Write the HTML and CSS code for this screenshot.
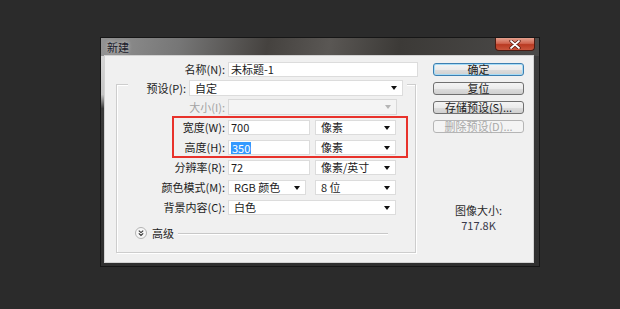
FILE: index.html
```html
<!DOCTYPE html>
<html>

<head>
    <meta charset="UTF-8">
    <title>新建</title>
    <link rel="stylesheet" href="styles.css">
</head>

<body>
    <div class="dialog">
        <div class="titlebar">
            <span class="title">新建</span>
            <span class="close">
                <svg width="14" height="9" viewBox="0 0 14 9">
                    <path d="M3 1 L11 8 M11 1 L3 8" stroke="#4a1208" stroke-width="3.2" stroke-linecap="round" />
                    <path d="M3 1 L11 8 M11 1 L3 8" stroke="#ffffff" stroke-width="1.8" stroke-linecap="round" />
                </svg>
            </span>
        </div>

        <div class="client">
            <div class="form">
                <div class="row name-row">
                    <span class="lbl lbl-name">名称(N):</span>
                    <div class="field text w-name">未标题-1</div>
                </div>

                <div class="group">
                    <div class="preset-row">
                        <span class="lbl lbl-preset">预设(P):</span>
                        <div class="field select w-preset">自定<span class="arrow"></span></div>
                    </div>

                    <div class="row row-size disabled">
                        <span class="lbl">大小(I):</span>
                        <div class="field select w-full"><span class="arrow"></span></div>
                    </div>

                    <div class="row">
                        <span class="lbl">宽度(W):</span>
                        <div class="field text w-num">700</div>
                        <div class="field select w-unit">像素<span class="arrow"></span></div>
                    </div>

                    <div class="row">
                        <span class="lbl">高度(H):</span>
                        <div class="field text w-num"><span class="selected">350</span></div>
                        <div class="field select w-unit">像素<span class="arrow"></span></div>
                    </div>

                    <div class="row">
                        <span class="lbl">分辨率(R):</span>
                        <div class="field text w-num">72</div>
                        <div class="field select w-unit">像素/英寸<span class="arrow"></span></div>
                    </div>

                    <div class="row">
                        <span class="lbl">颜色模式(M):</span>
                        <div class="field select w-mode">RGB 颜色<span class="arrow"></span></div>
                        <div class="field select w-unit w-bits">8 位<span class="arrow"></span></div>
                    </div>

                    <div class="row">
                        <span class="lbl">背景内容(C):</span>
                        <div class="field select w-bg">白色<span class="arrow"></span></div>
                    </div>

                    <div class="advanced">
                        <svg class="adv-btn" width="12" height="12" viewBox="0 0 12 12">
                            <circle cx="6" cy="6" r="5.5" fill="#f7f7f7" stroke="#b4b4b4" />
                            <path d="M3.8 3.6 L6 5.6 L8.2 3.6 M3.8 6.4 L6 8.4 L8.2 6.4" fill="none" stroke="#333" stroke-width="1.1" />
                        </svg>
                        <span class="adv-text">高级</span>
                        <span class="rule"></span>
                    </div>
                </div>

                <!-- annotation drawn over the width / height rows -->
                <div class="highlight"></div>
            </div>

            <div class="side">
                <div class="btn default">确定</div>
                <div class="btn">复位</div>
                <div class="btn">存储预设(S)...</div>
                <div class="btn disabled">删除预设(D)...</div>

                <div class="info">
                    <div>图像大小:</div>
                    <div class="info-size">717.8K</div>
                </div>
            </div>
        </div>
    </div>
</body>

</html>
```

FILE: styles.css
```css
body {
    margin: 0;
    background-color: #2b2b2b;
    font-family: "Noto Sans CJK SC", "Noto Sans", sans-serif;
    font-size: 11px;
    color: #1c1c1c;
}

.dialog {
    box-sizing: border-box;
    width: 440px;
    height: 230px;
    margin: 37px 0 0 100px;
    border: 1px solid #161616;
    /* light reflection on the upper left of the frame */
    background:
        linear-gradient(to bottom, #d6d6d6 0, #c4c4c4 55%, #3a3a3a 75%, transparent 100%) left 0 top 18px / 4px 70px no-repeat,
        linear-gradient(to bottom, #3e3e3e 0, #2f2f2f 100%);
}

.titlebar {
    display: flex;
    justify-content: space-between;
    height: 18px;
    padding-left: 6px;
    background: linear-gradient(100deg, #939393 0%, #767676 18%, #45423f 38%, #5a5754 52%, #3c3a37 68%, #4b4a49 100%);
}

.title {
    line-height: 18px;
    color: #1a1a2a;
    text-shadow: 0 0 4px rgba(255, 255, 255, 0.6);
}

.close {
    display: flex;
    align-items: center;
    justify-content: center;
    box-sizing: border-box;
    width: 40px;
    height: 13px;
    margin-right: 4px;
    border: 1px solid #4c1b12;
    border-top: none;
    border-radius: 0 0 4px 4px;
    background: linear-gradient(to bottom, #e3a08d 0%, #d0644f 45%, #b93a22 55%, #c9553c 100%);
}

.client {
    display: flex;
    height: 206px;
    margin: 0 6px 0 4px;
    background-color: #f0f0f0;
    box-shadow: 0 0 0 1px #d2d2d2;
}

/* left column with the form */
.form {
    position: relative;
    width: 315px;
    padding-top: 6px;
}

.row {
    display: flex;
    align-items: center;
    height: 15px;
}

.lbl {
    width: 108px;
    margin-right: 3px;
    text-align: right;
    white-space: nowrap;
    line-height: 15px;
}

.lbl-name {
    width: 120px;
}

.field {
    box-sizing: border-box;
    display: flex;
    align-items: center;
    height: 15px;
    background-color: #ffffff;
    border: 1px solid #dcdcdc;
    white-space: nowrap;
    line-height: 13px;
}

.text {
    padding-left: 2px;
}

.select {
    justify-content: space-between;
    padding: 0 5px 0 5px;
}

.arrow {
    width: 0;
    height: 0;
    margin-left: auto;
    border-left: 3.5px solid transparent;
    border-right: 3.5px solid transparent;
    border-top: 4px solid #111111;
}

.w-name {
    width: 190px;
}

.w-preset {
    width: 214px;
    height: 16px;
}

.w-full {
    width: 169px;
}

.w-num {
    width: 82px;
}

.w-unit {
    width: 81px;
    margin-left: 5px;
}

.w-mode {
    width: 78px;
}

.w-bits {
    margin-left: 9px;
}

.w-bg {
    width: 168px;
}

.selected {
    background-color: #3399ff;
    color: #ffffff;
    padding: 0 1px;
    line-height: 12px;
}

.disabled .lbl {
    color: #a3a3a3;
}

.disabled .field {
    background-color: #f4f4f4;
    border-color: #d9d9d9;
}

.disabled .arrow {
    border-top-color: #b5b5b5;
}

/* group box */
.group {
    display: flex;
    flex-direction: column;
    gap: 5px;
    box-sizing: border-box;
    width: 300px;
    margin: 7px 0 0 11px;
    padding-bottom: 13px;
    border: 1px solid #cdcdcd;
    box-shadow: inset 1px 1px 0 #ffffff, 1px 1px 0 #ffffff;
}

.preset-row {
    display: flex;
    align-items: center;
    align-self: flex-start;
    height: 16px;
    margin: -5px 0 0 11px;
    padding-right: 4px;
    background-color: #f0f0f0;
}

.lbl-preset {
    width: 58px;
}

.row-size {
    height: 16px;
    margin-top: -2px;
}

.row-size .field {
    height: 16px;
}

.advanced {
    display: flex;
    align-items: center;
    height: 12px;
    margin: 7px 0 0 18px;
}

.adv-text {
    margin-left: 5px;
    line-height: 12px;
}

.rule {
    width: 210px;
    height: 1px;
    margin-left: 4px;
    background-color: #c8c8c8;
    box-shadow: 0 1px 0 #ffffff;
}

.highlight {
    position: absolute;
    left: 67px;
    top: 60px;
    width: 236px;
    height: 42px;
    box-sizing: border-box;
    border: 2px solid #e8322b;
}

/* right column with the buttons */
.side {
    width: 91px;
    margin-left: 13px;
    padding-top: 7px;
}

.btn {
    box-sizing: border-box;
    height: 13px;
    margin-bottom: 6px;
    border: 1px solid #707070;
    border-radius: 3px;
    background: linear-gradient(to bottom, #f4f4f4 0%, #ebebeb 50%, #dddddd 51%, #d0d0d0 100%);
    text-align: center;
    line-height: 11px;
    white-space: nowrap;
}

.btn.default {
    border-color: #3c7fb1;
    box-shadow: inset 0 0 0 1px #a7dcf6;
}

.btn.disabled {
    border-color: #b5b5b5;
    background: #f4f4f4;
    color: #a8a8a8;
}

.info {
    margin-top: 70px;
    text-align: center;
    line-height: 15px;
    color: #2a2a2a;
}

.info-size {
    color: #3a3a4a;
}
```
